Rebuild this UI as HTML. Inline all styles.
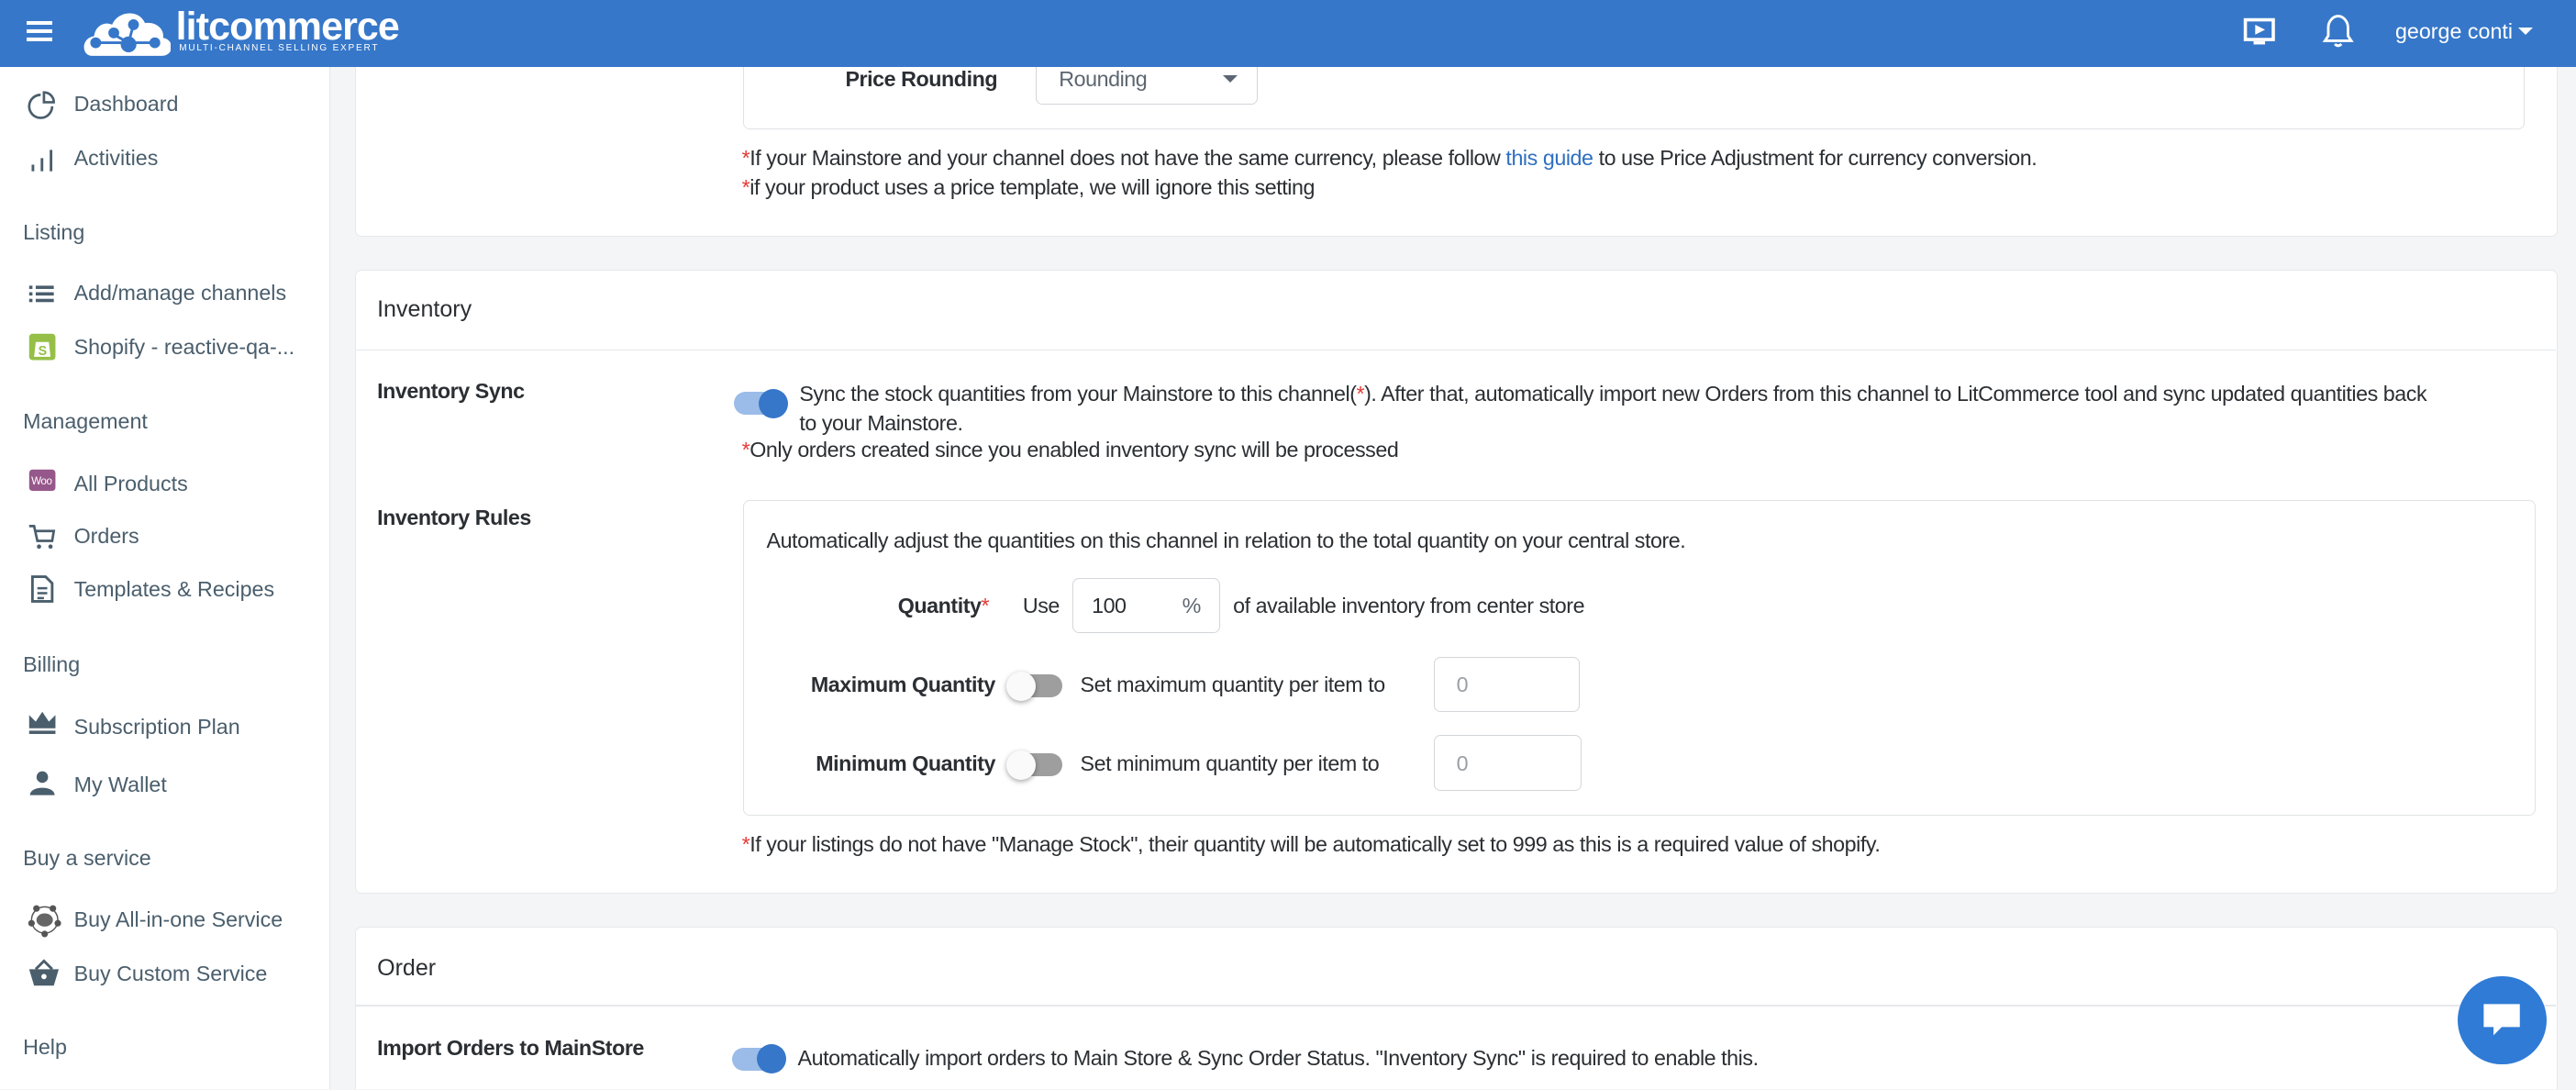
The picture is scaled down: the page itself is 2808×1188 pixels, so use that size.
<!DOCTYPE html>
<html><head><meta charset="utf-8"><style>
*{box-sizing:border-box;margin:0;padding:0}
html,body{width:2808px;height:1188px;overflow:hidden;background:#f4f5f7}
#w{zoom:1.7908;width:1568px;height:663px;position:relative;font-family:"Liberation Sans",sans-serif;font-size:13px;color:#2b2f33;letter-spacing:-0.25px;overflow:hidden;background:#f4f5f7}
.a{position:absolute;white-space:nowrap}
#hdr{position:absolute;left:0;top:0;width:1568px;height:41px;background:#3677c9;z-index:5}
#side{position:absolute;left:0;top:41px;width:201px;height:622px;background:#fff;border-right:1px solid #e3e6e9}
.si{position:absolute;left:45px;color:#4a5e6c;font-size:13px;letter-spacing:0}
.sh{position:absolute;left:14px;color:#4a5e6c;font-size:13px;letter-spacing:0}
.ic{position:absolute;left:17px}
.card{position:absolute;left:216px;width:1341px;background:#fff;border:1px solid #e6e8eb;border-radius:4px}
.lbl{font-weight:bold;color:#2b2f33}
.red{color:#e53935}
.tg{position:absolute;width:32px;height:14px;border-radius:7px}
.tg.on{background:#9bbce8}
.tg.on::after{content:"";position:absolute;right:-1px;top:-2px;width:18px;height:18px;border-radius:50%;background:#3677c9}
.tg.off{background:#9e9e9e}
.tg.off::after{content:"";position:absolute;left:-2px;top:-2px;width:18px;height:18px;border-radius:50%;background:#fafafa;box-shadow:0 1px 3px rgba(0,0,0,.35)}
.inp{position:absolute;border:1px solid #d3d6da;border-radius:4px;background:#fff}
</style></head><body><div id="w">
<div id="hdr">
 <div class="a" style="left:16px;top:13px;width:16px;height:2px;background:#fff;box-shadow:0 5px 0 #fff,0 10px 0 #fff"></div>
 <svg class="a" style="left:92px;top:6px" width="88" height="56" viewBox="0 0 88 56"></svg>
 <svg class="a" style="left:50px;top:5px" width="54" height="30" viewBox="0 0 54 30"><path d="M6 29 C-1 29 -1 18 7 17 C8 10 14 8 18 10 C21 2 34 0 38 9 C45 8 50 13 49 18 C56 19 56 29 48 29 Z" fill="#fff"/><g stroke="#3677c9" stroke-width="1.6" fill="#3677c9"><line x1="19" y1="16" x2="28" y2="21"/><line x1="28" y1="21" x2="31" y2="10"/><line x1="8" y1="21" x2="44" y2="21"/><circle cx="19" cy="15" r="2.5"/><circle cx="31" cy="10" r="2.5"/><circle cx="8" cy="21" r="2.5"/><circle cx="44" cy="21" r="2.5"/><circle cx="28" cy="22" r="4"/></g></svg>
 <div class="a" style="left:107px;top:3px;color:#fff;font-size:24px;font-weight:bold;letter-spacing:-0.5px">litcommerce</div>
 <div class="a" style="left:109px;top:26px;color:#fff;font-size:5.6px;letter-spacing:1px">MULTI-CHANNEL SELLING EXPERT</div>
 <svg class="a" style="left:1365px;top:10px" width="22" height="20" viewBox="0 0 22 20"><rect x="2" y="2" width="17" height="12" fill="none" stroke="#fff" stroke-width="2"/><path d="M8 5 L14 8 L8 11Z" fill="#fff"/><rect x="7" y="15" width="7" height="2" fill="#fff"/></svg>
 <svg class="a" style="left:1412px;top:8px" width="22" height="24" viewBox="0 0 22 24"><path d="M3 17 L5 14 L5 9 C5 5 8 2 11 2 C14 2 17 5 17 9 L17 14 L19 17Z" fill="none" stroke="#fff" stroke-width="1.6"/><path d="M9 19 Q11 21 13 19" fill="none" stroke="#fff" stroke-width="1.6"/></svg>
 <div class="a" style="left:1458px;top:12px;color:#fff;font-size:13px;letter-spacing:0">george conti</div>
 <div class="a" style="left:1533px;top:17px;width:0;height:0;border-left:5px solid transparent;border-right:5px solid transparent;border-top:5px solid #fff"></div>
</div>

<div id="side">
 <svg class="ic" style="top:14px" width="18" height="18" viewBox="0 0 18 18"><path d="M8 3 A7 7 0 1 0 15 10" fill="none" stroke="#4a5e6c" stroke-width="1.5"/><path d="M10 1.5 A6 6 0 0 1 16 7.5 L10 7.5Z" fill="none" stroke="#4a5e6c" stroke-width="1.5"/></svg>
 <div class="si" style="top:15px">Dashboard</div>
 <svg class="ic" style="top:47px" width="18" height="18" viewBox="0 0 18 18"><rect x="20" y="0"/><rect x="2.5" y="12" width="1.6" height="4" fill="#4a5e6c"/><rect x="8" y="8" width="1.6" height="8" fill="#4a5e6c"/><rect x="13.5" y="3" width="1.6" height="13" fill="#4a5e6c"/></svg>
 <div class="si" style="top:48px">Activities</div>
 <div class="sh" style="top:93px">Listing</div>
 <svg class="ic" style="top:130px" width="18" height="16" viewBox="0 0 18 16"><g fill="#4a5e6c"><rect x="1" y="3" width="2" height="2"/><rect x="1" y="7" width="2" height="2"/><rect x="1" y="11" width="2" height="2"/><rect x="5" y="3" width="11" height="2"/><rect x="5" y="7" width="11" height="2"/><rect x="5" y="11" width="11" height="2"/></g></svg>
 <div class="si" style="top:130px">Add/manage channels</div>
 <svg class="ic" style="top:161px" width="18" height="18" viewBox="0 0 18 18"><rect x="1" y="1" width="16" height="16" rx="2" fill="#95bf47"/><path d="M5 6 L13 6 L14 15 L4 15Z" fill="#fff"/><text x="6.5" y="14" font-size="8" font-weight="bold" fill="#95bf47" font-family="Liberation Sans">S</text></svg>
 <div class="si" style="top:163px">Shopify - reactive-qa-...</div>
 <div class="sh" style="top:208px">Management</div>
 <svg class="ic" style="top:244px" width="18" height="16" viewBox="0 0 18 16"><rect x="1" y="1" width="16" height="13" rx="2" fill="#96588a"/><text x="2.3" y="10" font-size="6.5" fill="#fff" font-family="Liberation Sans">Woo</text></svg>
 <div class="si" style="top:246px">All Products</div>
 <svg class="ic" style="top:276px" width="18" height="18" viewBox="0 0 18 18"><path d="M1 3 L4 3 L6 12 L15 12 L16 6 L5 6" fill="none" stroke="#4a5e6c" stroke-width="1.5"/><circle cx="7" cy="15.5" r="1.3" fill="#4a5e6c"/><circle cx="14" cy="15.5" r="1.3" fill="#4a5e6c"/></svg>
 <div class="si" style="top:278px">Orders</div>
 <svg class="ic" style="top:308px" width="18" height="18" viewBox="0 0 18 18"><path d="M3 2 L11 2 L15 6 L15 17 L3 17Z" fill="none" stroke="#4a5e6c" stroke-width="1.6"/><path d="M6 9 H12 M6 12 H12 M6 15 H10" stroke="#4a5e6c" stroke-width="1.4"/></svg>
 <div class="si" style="top:310px">Templates &amp; Recipes</div>
 <div class="sh" style="top:356px">Billing</div>
 <svg class="ic" style="top:391px" width="18" height="16" viewBox="0 0 18 16"><path d="M1 3 L5 7 L9 1 L13 7 L17 3 L17 11 L1 11Z" fill="#4a5e6c"/><rect x="1" y="12.5" width="16" height="2" fill="#4a5e6c"/></svg>
 <div class="si" style="top:394px">Subscription Plan</div>
 <svg class="ic" style="top:427px" width="18" height="18" viewBox="0 0 18 18"><circle cx="9" cy="5" r="3.5" fill="#4a5e6c"/><path d="M1.5 16 C1.5 10 16.5 10 16.5 16Z" fill="#4a5e6c"/></svg>
 <div class="si" style="top:429px">My Wallet</div>
 <div class="sh" style="top:474px">Buy a service</div>
 <svg class="ic" style="top:508px;left:16px" width="22" height="22" viewBox="0 0 22 22"><circle cx="11" cy="11" r="8" fill="none" stroke="#555" stroke-width="0.8"/><ellipse cx="11" cy="11" rx="5" ry="4" fill="#666"/><g fill="#555"><circle cx="6" cy="4" r="2"/><circle cx="16" cy="4" r="2"/><circle cx="3" cy="13" r="2"/><circle cx="19" cy="13" r="2"/><circle cx="11" cy="19.5" r="2"/></g></svg>
 <div class="si" style="top:511px">Buy All-in-one Service</div>
 <svg class="ic" style="top:541px" width="20" height="20" viewBox="0 0 20 20"><path d="M1 8 L19 8 L16 18 L4 18Z" fill="#4a5e6c"/><path d="M5 8 L10 3 L15 8" fill="none" stroke="#4a5e6c" stroke-width="1.6"/><circle cx="10" cy="12.5" r="1.6" fill="#fff"/></svg>
 <div class="si" style="top:544px">Buy Custom Service</div>
 <div class="sh" style="top:589px">Help</div>
</div>

<!-- card 1 -->
<div class="card" style="top:20px;height:124px">
 <div class="a" style="left:236px;top:-2px;width:1084px;height:60px;border:1px solid #e0e2e5;border-radius:4px"></div>
 <div class="a lbl" style="left:298px;top:20px">Price Rounding</div>
 <div class="a" style="left:414px;top:3px;width:135px;height:40px;border:1px solid #d3d6da;border-radius:4px"></div>
 <div class="a" style="left:428px;top:20px;color:#5d6670">Rounding</div>
 <div class="a" style="left:528px;top:25px;width:0;height:0;border-left:4.5px solid transparent;border-right:4.5px solid transparent;border-top:5px solid #5d6670"></div>
 <div class="a" style="left:235px;top:68px"><span class="red">*</span>If your Mainstore and your channel does not have the same currency, please follow <span style="color:#2f6fbf">this guide</span> to use Price Adjustment for currency conversion.</div>
 <div class="a" style="left:235px;top:86px"><span class="red">*</span>if your product uses a price template, we will ignore this setting</div>
</div>

<!-- card 2 -->
<div class="card" style="top:164px;height:380px">
 <div class="a" style="left:13px;top:16px;font-size:14px;letter-spacing:0">Inventory</div>
 <div class="a" style="left:0;top:48px;width:1339px;height:1px;background:#e6e8eb"></div>
 <div class="a lbl" style="left:13px;top:66px">Inventory Sync</div>
 <div class="tg on" style="left:230px;top:74px"></div>
 <div class="a" style="left:270px;top:66px;line-height:18px">Sync the stock quantities from your Mainstore to this channel(<span class="red">*</span>). After that, automatically import new Orders from this channel to LitCommerce tool and sync updated quantities back<br>to your Mainstore.</div>
 <div class="a" style="left:235px;top:102px"><span class="red">*</span>Only orders created since you enabled inventory sync will be processed</div>
 <div class="a lbl" style="left:13px;top:143px">Inventory Rules</div>
 <div class="a" style="left:236px;top:140px;width:1091px;height:192px;border:1px solid #e0e2e5;border-radius:4px"></div>
 <div class="a" style="left:250px;top:157px">Automatically adjust the quantities on this channel in relation to the total quantity on your central store.</div>
 <div class="a lbl" style="left:330px;top:197px">Quantity<span class="red" style="font-weight:normal">*</span></div>
 <div class="a" style="left:406px;top:197px">Use</div>
 <div class="inp" style="left:436px;top:187px;width:90px;height:34px"></div>
 <div class="a" style="left:448px;top:197px">100</div>
 <div class="a" style="left:503px;top:197px;color:#5d6670">%</div>
 <div class="a" style="left:534px;top:197px">of available inventory from center store</div>
 <div class="a lbl" style="left:277px;top:245px">Maximum Quantity</div>
 <div class="tg off" style="left:398px;top:246px"></div>
 <div class="a" style="left:441px;top:245px">Set maximum quantity per item to</div>
 <div class="inp" style="left:656px;top:235px;width:89px;height:34px"></div>
 <div class="a" style="left:670px;top:245px;color:#9aa0a6">0</div>
 <div class="a lbl" style="left:280px;top:293px">Minimum Quantity</div>
 <div class="tg off" style="left:398px;top:294px"></div>
 <div class="a" style="left:441px;top:293px">Set minimum quantity per item to</div>
 <div class="inp" style="left:656px;top:283px;width:90px;height:34px"></div>
 <div class="a" style="left:670px;top:293px;color:#9aa0a6">0</div>
 <div class="a" style="left:235px;top:342px"><span class="red">*</span>If your listings do not have "Manage Stock", their quantity will be automatically set to 999 as this is a required value of shopify.</div>
</div>

<!-- card 3 -->
<div class="card" style="top:564px;height:120px">
 <div class="a" style="left:13px;top:17px;font-size:14px;letter-spacing:0">Order</div>
 <div class="a" style="left:0;top:47px;width:1339px;height:1px;background:#e6e8eb"></div>
 <div class="a lbl" style="left:13px;top:66px">Import Orders to MainStore</div>
 <div class="tg on" style="left:229px;top:73px"></div>
 <div class="a" style="left:269px;top:72px">Automatically import orders to Main Store &amp; Sync Order Status. "Inventory Sync" is required to enable this.</div>
</div>

<div class="a" style="left:1496px;top:594px;width:54px;height:54px;border-radius:50%;background:#2f7bd6"></div>
<svg class="a" style="left:1509px;top:608px" width="28" height="26" viewBox="0 0 28 26"><path d="M3 3 L25 3 L25 17 L14 17 L9 22 L9 17 L3 17Z" fill="#fff"/></svg>
</div></body></html>
